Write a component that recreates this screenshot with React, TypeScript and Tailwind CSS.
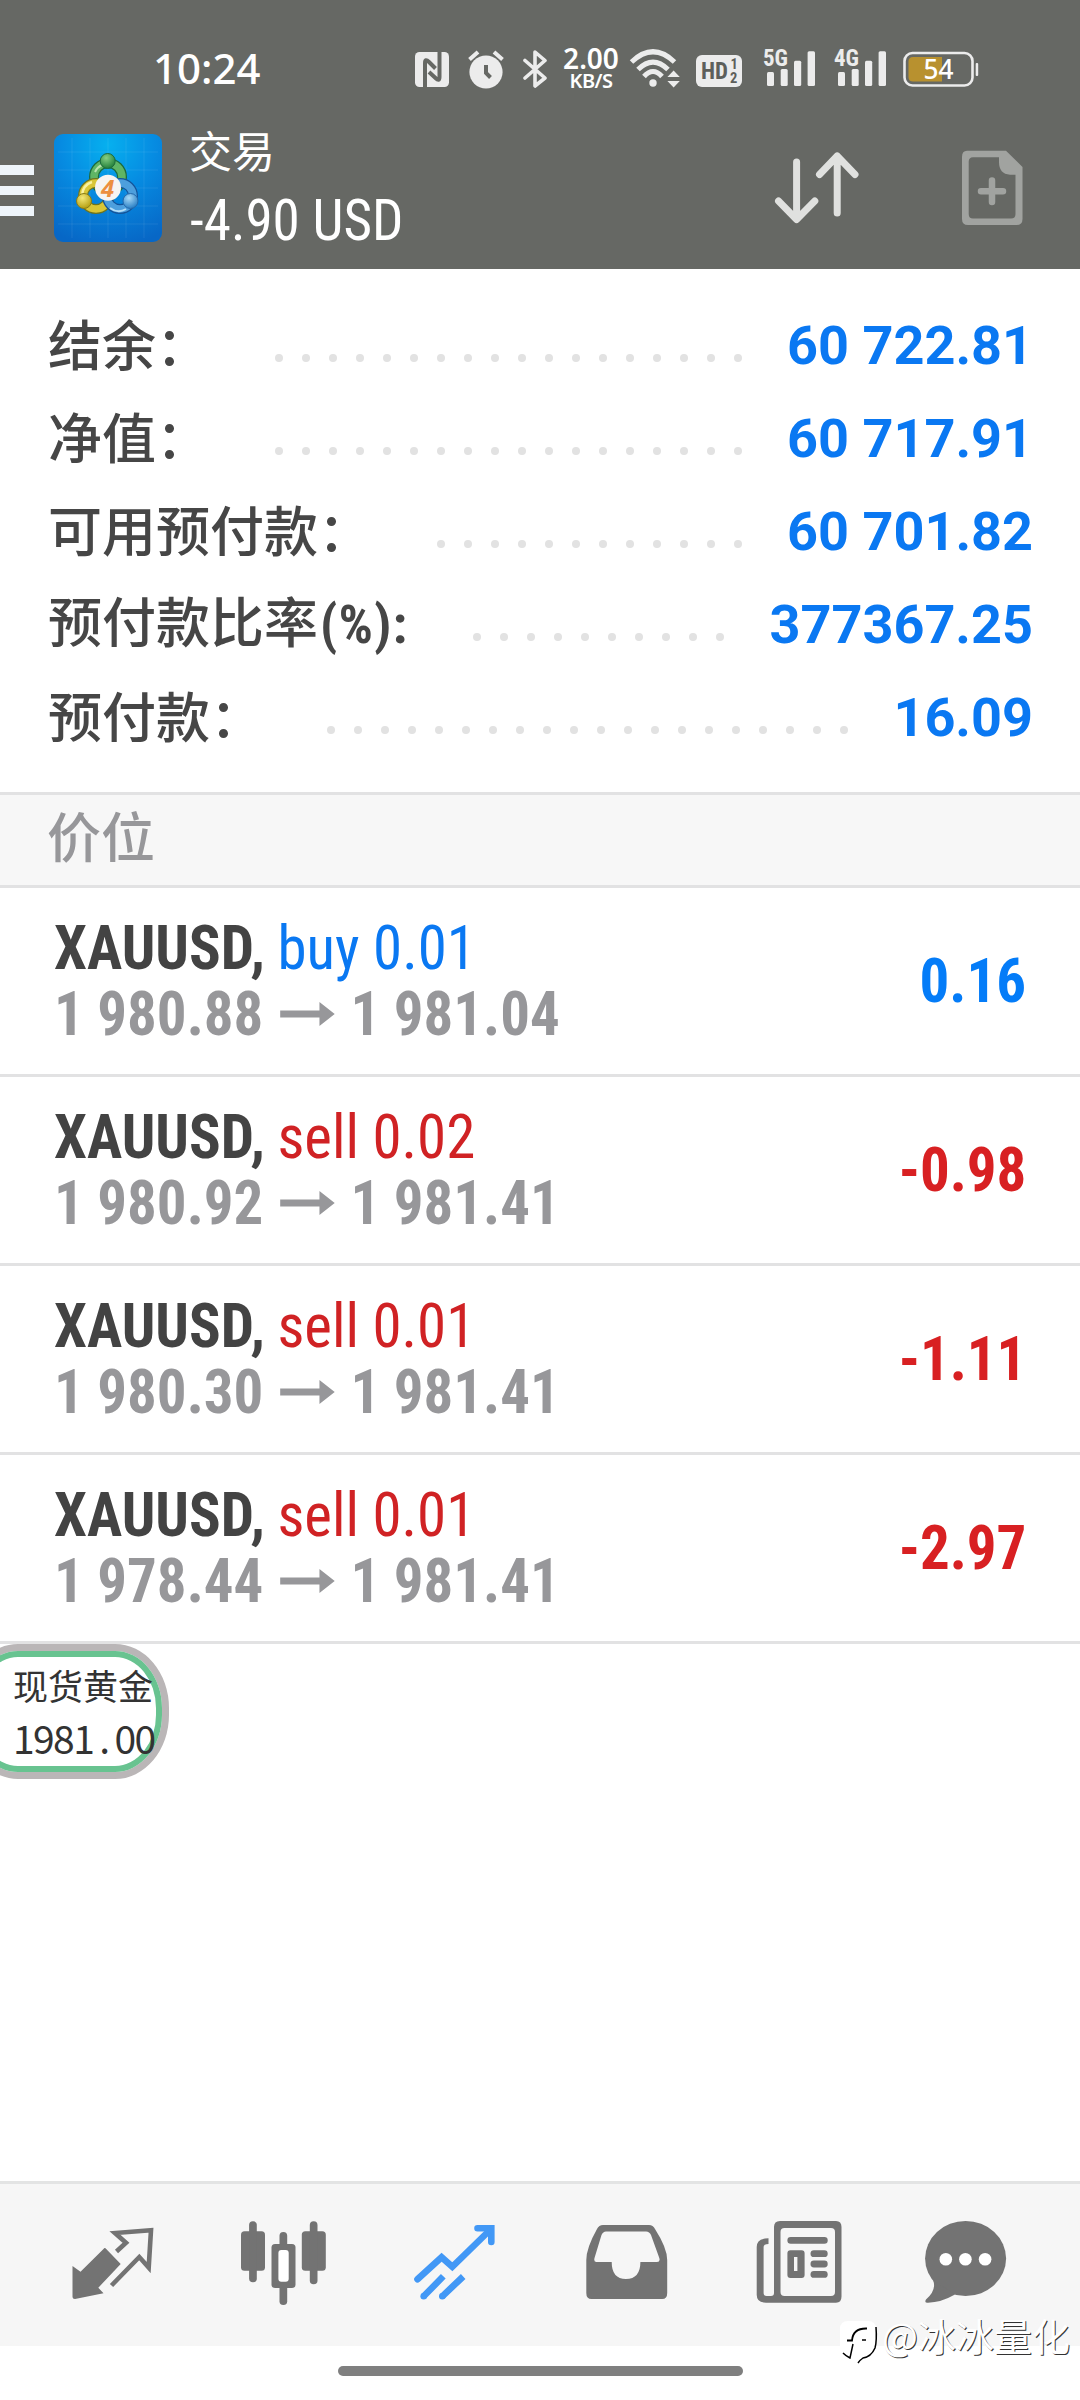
type AccountLine = {
  label: string;
  suffix?: string;
  dots: number;
  value: string;
};

type Position = {
  side: "buy" | "sell";
  volume: string;
  open: string;
  current: string;
  profit: string;
};

const account: AccountLine[] = [
  { label: "结余：", dots: 18, value: "60 722.81" },
  { label: "净值：", dots: 18, value: "60 717.91" },
  { label: "可用预付款：", dots: 12, value: "60 701.82" },
  { label: "预付款比率", suffix: "(%):", dots: 10, value: "377367.25" },
  { label: "预付款：", dots: 20, value: "16.09" },
];

const positions: Position[] = [
  { side: "buy", volume: "0.01", open: "1 980.88", current: "1 981.04", profit: "0.16" },
  { side: "sell", volume: "0.02", open: "1 980.92", current: "1 981.41", profit: "-0.98" },
  { side: "sell", volume: "0.01", open: "1 980.30", current: "1 981.41", profit: "-1.11" },
  { side: "sell", volume: "0.01", open: "1 978.44", current: "1 981.41", profit: "-2.97" },
];

const Signal = ({ label }: { label: string }) => (
  <svg width="53" height="40" viewBox="0 0 53 40" fill="#ececec" className="overflow-visible">
    <rect x="4" y="23" width="7" height="14" rx="1.5" />
    <rect x="17.7" y="20" width="7" height="17" rx="1.5" />
    <rect x="31" y="11.7" width="7.2" height="25.3" rx="1.5" />
    <rect x="44.6" y="2.3" width="7.4" height="34.7" rx="1.5" />
    <text
      x="0"
      y="17.3"
      textLength="25"
      lengthAdjust="spacingAndGlyphs"
      stroke="#666864"
      strokeWidth="2"
      paintOrder="stroke"
      className="font-['Roboto_Condensed'] text-[24px] font-bold"
    >
      {label}
    </text>
  </svg>
);

const StatusBar = () => (
  <div className="flex h-[138px] items-center pl-[153px] text-white">
    <span className="mb-[3px] w-[262px] font-['Noto_Sans'] text-[42px] leading-none font-medium">
      10:24
    </span>
    {/* NFC */}
    <svg width="34" height="40" viewBox="0 0 34 40">
      <rect y="3" width="34" height="35" rx="4.5" fill="#ececec" />
      <g fill="none" stroke="#666864" strokeWidth="4">
        <path d="M10 38.5V14Q10 9 14 13L20.5 19.5" />
        <path d="M24.5 2.5V28Q24.5 33 20.5 29L14 23" />
      </g>
    </svg>
    {/* 알람 */}
    <svg width="36" height="40" viewBox="0 0 36 40" className="ml-[19px]">
      <circle cx="18" cy="23" r="16.6" fill="#ececec" />
      <path d="M1.5 10.5L10 3M26 3l8.5 7.5" stroke="#ececec" strokeWidth="4" />
      <path d="M18 16v8l4.5 4.5" stroke="#666864" strokeWidth="4" fill="none" />
    </svg>
    <svg width="25" height="40" viewBox="0 0 25 40" className="ml-[19px]">
      <path
        d="M2 11.5L22 29 12 37V3l10 8.5L2 29"
        fill="none"
        stroke="#ececec"
        strokeWidth="3.6"
        strokeLinejoin="round"
        strokeLinecap="round"
      />
    </svg>
    <div className="mb-[2px] ml-[13px] flex w-[60px] flex-col items-center font-['Noto_Sans'] leading-none font-semibold">
      <span className="mb-px text-[28px] leading-[24px]">2.00</span>
      <span className="text-[20px] leading-[20px] tracking-[-0.5px]">KB/S</span>
    </div>
    <svg width="52" height="40" viewBox="0 0 52 40" className="ml-[8px]">
      <g fill="none" stroke="#ececec" strokeWidth="5">
        <path d="M2.5 13Q24 -7.5 45.5 13" />
        <path d="M9 20.5Q24 5.5 39 20.5" />
        <path d="M15 27.5Q24 17.5 33 27.5" />
      </g>
      <circle cx="24" cy="34" r="3.7" fill="#ececec" />
      <path d="M38.4 28l6.2-6.5 6.2 6.5zM38.4 32h12.4l-6.2 6.5z" fill="#ececec" />
    </svg>
    <svg width="46" height="40" viewBox="0 0 46 40" className="ml-[15px]">
      <rect y="6" width="46" height="32" rx="6" fill="#ececec" />
      <g fill="#5d5f5b" className="font-['Roboto_Condensed'] font-bold">
        <text x="5" y="30.3" textLength="27" lengthAdjust="spacingAndGlyphs" className="text-[24px]">
          HD
        </text>
        <text x="34.5" y="20" className="text-[14.5px]">
          1
        </text>
        <text x="34" y="34" className="text-[14.5px]">
          2
        </text>
      </g>
    </svg>
    <div className="ml-[21px]">
      <Signal label="5G" />
    </div>
    <div className="ml-[18px]">
      <Signal label="4G" />
    </div>
    <svg width="76" height="40" viewBox="0 0 76 40" className="ml-[16px]">
      <rect x="1.5" y="4" width="68" height="32.5" rx="8" fill="none" stroke="#ececec" strokeWidth="2.6" />
      <path d="M10 8H39V32.5H10Q5.5 32.5 5.5 28V12.5Q5.5 8 10 8z" fill="#b8912f" />
      <rect x="72.7" y="14" width="2.5" height="13" rx="1" fill="#ececec" />
      <text
        x="20.5"
        y="30"
        textLength="30"
        lengthAdjust="spacingAndGlyphs"
        fill="#fff"
        className="font-['Noto_Sans'] text-[27px] font-medium"
      >
        54
      </text>
    </svg>
  </div>
);

const Logo = () => (
  <svg width="108" height="108" viewBox="0 0 108 108">
    <defs>
      <radialGradient id="sky" cx="0.5" cy="0.1" r="0.95">
        <stop offset="0" stopColor="#06b0ef" />
        <stop offset="0.45" stopColor="#068ce2" />
        <stop offset="1" stopColor="#0767c6" />
      </radialGradient>
      <radialGradient id="green" cx="0.4" cy="0.3" r="0.7">
        <stop offset="0" stopColor="#86cf84" />
        <stop offset="1" stopColor="#23803a" />
      </radialGradient>
      <radialGradient id="yellow" cx="0.4" cy="0.3" r="0.7">
        <stop offset="0" stopColor="#f4e878" />
        <stop offset="1" stopColor="#b5a012" />
      </radialGradient>
      <radialGradient id="blue" cx="0.4" cy="0.3" r="0.7">
        <stop offset="0" stopColor="#a7daf8" />
        <stop offset="1" stopColor="#2a7fc4" />
      </radialGradient>
    </defs>
    <rect width="108" height="108" rx="9" fill="url(#sky)" />
    <path
      d="M18 4V104M36 4V104M54 4V104M72 4V104M90 4V104M4 18H104M4 36H104M4 54H104M4 72H104M4 90H104"
      stroke="#fff"
      strokeOpacity="0.08"
    />
    <g fill="none">
      <circle cx="54" cy="43" r="14" stroke="#1c6a3c" strokeWidth="10" />
      <circle cx="54" cy="43" r="14" stroke="#5fb565" strokeWidth="7.5" />
      <path d="M41 38a14 14 0 0 1 7-7" stroke="#b9e3ae" strokeWidth="2" />
      <circle cx="42" cy="62" r="13" stroke="#6d7420" strokeWidth="10" />
      <circle cx="42" cy="62" r="13" stroke="#d9c636" strokeWidth="7.5" />
      <path d="M28 61q1-10 10-13" stroke="#f9f2a0" strokeWidth="2.5" />
      <circle cx="66" cy="62" r="13" stroke="#14549a" strokeWidth="10" />
      <circle cx="66" cy="62" r="13" stroke="#4d9fdd" strokeWidth="7.5" />
      <path d="M56 74q8 6 16 1" stroke="#b5def7" strokeWidth="2" />
    </g>
    <circle cx="53.7" cy="27" r="7.5" fill="url(#green)" stroke="#1c6a3c" />
    <circle cx="30" cy="67" r="7.5" fill="url(#yellow)" stroke="#8a7d17" />
    <circle cx="76.5" cy="67" r="7.5" fill="url(#blue)" stroke="#2468ab" />
    <circle cx="54" cy="53.7" r="13" fill="#f6f4f2" />
    <text x="53.5" y="62.5" textAnchor="middle" fill="#ec8f3f" className="font-['Open_Sans'] text-[24px] font-bold italic">
      4
    </text>
  </svg>
);

const Header = () => (
  <header className="h-[269px] bg-[#666864]">
    <StatusBar />
    <div className="-mt-[10px] flex h-[141px] items-start">
      <div className="mt-[37px] flex w-[34px] flex-col gap-[11px]">
        <span className="h-[9.5px] bg-[#eef5fb]" />
        <span className="h-[9.5px] bg-[#eef5fb]" />
        <span className="h-[9.5px] bg-[#eef5fb]" />
      </div>
      <div className="mt-[6px] ml-[20px]">
        <Logo />
      </div>
      <div className="ml-[27px] flex flex-col text-white">
        <span className="font-['Noto_Sans_CJK_SC',sans-serif] text-[43px] leading-[42px]">交易</span>
        <span className="mt-[22px] ml-px origin-left scale-x-[0.967] font-['Roboto_Condensed'] text-[57px] leading-[57px] font-[450]">
          -4.90 USD
        </span>
      </div>
      <svg width="88" height="78" viewBox="0 0 88 78" className="mt-[21px] ml-auto">
        <g fill="none" stroke="#e0e1df" strokeWidth="7" strokeLinecap="round" strokeLinejoin="round">
          <path d="M23.6 13V70M5.5 52L23.6 70.5 41.8 52" />
          <path d="M64.2 64V7M46.5 25.5L64.2 7 82 25.5" />
        </g>
      </svg>
      <svg width="62" height="76" viewBox="0 0 62 76" className="mt-[22px] mr-[57px] ml-[100px]">
        <path
          fillRule="evenodd"
          fill="#a1a3a0"
          d="M6 .7H45L61.5 17V69q0 6-6 6H7q-6 0-6-6V7Q1 .7 6 .7zM12 7.3q-4.3 0-4.3 4.5V64q0 4.5 4.3 4.5H50q4.5 0 4.5-4.5V24.7H49Q38 24 38 12V7.3z"
        />
        <path d="M31 30.5V52M20 41.3H42" stroke="#a1a3a0" strokeWidth="6.5" strokeLinecap="round" />
      </svg>
    </div>
  </header>
);

const AccountRow = ({ label, suffix, dots, value }: AccountLine) => (
  <div className="flex h-[93px] items-center pr-[47px] pl-[48px]">
    <span className="mb-[5px] font-['Noto_Sans_CJK_SC',sans-serif] text-[54px] leading-[88px] font-medium whitespace-nowrap text-[#464646]">
      {label}
      {suffix && (
        <span className="ml-[2px] font-['Roboto_Condensed'] font-bold tracking-[1px]">{suffix}</span>
      )}
    </span>
    <div className="mt-[25px] mr-[45px] ml-auto flex gap-[19px]">
      {Array.from({ length: dots }, (_, i) => (
        <span key={i} className="size-2 rounded-full bg-[#e2e2e2]" />
      ))}
    </div>
    <span className="font-['Roboto'] text-[54px] leading-[93px] font-bold whitespace-nowrap text-[#0a78f2]">
      {value}
    </span>
  </div>
);

const PositionRow = ({ side, volume, open, current, profit }: Position) => {
  const sideColor = side === "buy" ? "text-[#0a78f2]" : "text-[#d02224]";
  const profitColor = profit.startsWith("-") ? "text-[#d82022]" : "text-[#047cf8]";

  return (
    <div className="flex h-[189px] items-center justify-between border-b-3 border-[#e2e2e3] pr-[54px] pl-[54px] font-['Roboto_Condensed'] text-[62px] whitespace-nowrap">
      <div className="flex origin-left scale-x-95 flex-col leading-[66px]">
        <div>
          <span className="font-bold text-[#434343]">XAUUSD, </span>
          <span className={`-ml-px font-[450] ${sideColor}`}>
            {side} {volume}
          </span>
        </div>
        <div className="flex items-center font-bold text-[#97979a]">
          <span className="w-[238px]">{open}</span>
          <svg width="58" height="24" viewBox="0 0 56 24" preserveAspectRatio="none" fill="currentColor">
            <path d="M0 8.5H40V0L55.5 12 40 24V15.5H0z" />
          </svg>
          <span className="ml-[16px]">{current}</span>
        </div>
      </div>
      <span className={`mb-[2px] origin-right scale-x-95 font-bold ${profitColor}`}>{profit}</span>
    </div>
  );
};

const FloatingQuote = () => (
  <div className="absolute top-[1644px] -left-[36px] h-[135px] w-[205px] rounded-[54px/64px] border-7 border-[#bab6b7] bg-white">
    <div className="h-full rounded-[47px/57px] border-6 border-[#68c390] pt-[10px] pl-[36px] whitespace-nowrap text-[#333]">
      <div className="font-['Noto_Sans_CJK_SC',sans-serif] text-[35px] leading-[36px]">现货黄金</div>
      <div className="mt-[14px] font-['Noto_Sans_CJK_SC',sans-serif] text-[39px] leading-[40px] tracking-[-1.6px]">
        1981<span className="mx-[6px]">.</span>00
      </div>
    </div>
  </div>
);

const BottomNav = () => (
  <nav className="flex h-[165px] border-t-3 border-[#e3e4e4] bg-[#f6f6f6] px-[27px] pt-8 text-[#737373]">
    {/* 시세 */}
    <div className="flex w-[171px] justify-center">
      <svg width="90" height="94" viewBox="0 0 90 94" fill="currentColor">
        <path d="M37.5 32.3L52.7 48 30.3 71.7l5.2 5.6L7 83Q4.5 83 4.5 80.5V50l8 5.7L35.5 33q1-1.5 2-.7z" />
        <path
          d="M48.5 35.5L58 26.7 47 17 83 14.2 80.7 51.5 71.3 41 43.5 69.5"
          fill="none"
          stroke="currentColor"
          strokeWidth="4.6"
        />
      </svg>
    </div>
    {/* 차트 */}
    <div className="flex w-[171px] justify-center">
      <svg width="90" height="94" viewBox="0 0 90 94" fill="currentColor">
        <rect x="2" y="15.3" width="24" height="39.5" rx="3.5" />
        <rect x="10.1" y="5.3" width="7.7" height="61" rx="3.8" />
        <rect x="62.8" y="15.3" width="24" height="39.5" rx="3.5" />
        <rect x="70.8" y="5.3" width="7.7" height="63" rx="3.8" />
        <rect x="40.5" y="16" width="7.7" height="73" rx="3.8" />
        <rect x="32.5" y="28" width="24" height="44" rx="3.5" />
        <rect x="39.4" y="34" width="10.3" height="31.7" rx="3" fill="#fff" />
      </svg>
    </div>
    {/* 거래 */}
    <div className="flex w-[171px] justify-center">
      <svg width="90" height="94" viewBox="0 0 90 94" fill="none" stroke="#4298f6" strokeWidth="6.6">
        <path d="M7.5 63.3L31.6 41.3l10.7 9.5L80.5 13.5" strokeLinecap="round" />
        <path d="M67.5 12.3H81.3V26" strokeLinecap="round" />
        <path d="M13.7 80.3L33.3 60.3M32.3 80.3L53.2 60.5" />
        <g fill="#4298f6" stroke="none">
          <circle cx="13.7" cy="80.3" r="3.3" />
          <circle cx="32.3" cy="80.3" r="3.3" />
        </g>
      </svg>
    </div>
    {/* 내역 */}
    <div className="flex w-[171px] justify-center">
      <svg width="90" height="94" viewBox="0 0 90 94" fill="currentColor">
        <path
          fillRule="evenodd"
          d="M22 9H68q4 0 6 4Q86.2 32 86.2 44V77q0 6-5 6H10.5q-5.2 0-5.2-6V44Q5.3 32 16 13q2-4 6-4zM25 15.5q-3 0-4.5 3.5L13.5 42q-1 4 2 4H30.7q0 17 14.3 17T59.4 46H76q3.5 0 2.3-4L70 19q-1.5-3.5-5-3.5z"
        />
      </svg>
    </div>
    {/* 뉴스 */}
    <div className="flex w-[171px] justify-center">
      <svg width="90" height="94" viewBox="0 0 90 94" fill="currentColor">
        <path
          fillRule="evenodd"
          d="M28 5H84q5.5 0 5.5 6V80.5q0 6.2-5.5 6.2H14q-9.3 0-9.3-8V31q0-8.7 11.8-8.7v5.7q-4.9 0-4.9 3V77q0 3 3 3H19q3 0 3-3V11q0-6 6-6zM32.5 12q-4 0-4 4V76q0 4 4 4H79q4 0 4-4V16q0-4-4-4z"
        />
        <rect x="35.4" y="21" width="40.3" height="6.7" rx="3.3" />
        <path fillRule="evenodd" d="M38.4 34.3H49.6q3 0 3 3V59q0 3-3 3H38.4q-3 0-3-3V37.3q0-3 3-3zM42 41V55h3.4V41z" />
        <rect x="58.5" y="34.3" width="17.2" height="6.8" rx="3.4" />
        <rect x="58.5" y="44.6" width="17.2" height="6.8" rx="3.4" />
        <rect x="58.5" y="55" width="17.2" height="6.8" rx="3.4" />
      </svg>
    </div>
    {/* 메시지 */}
    <div className="flex w-[171px] justify-center">
      <svg width="90" height="94" viewBox="0 0 90 94" fill="currentColor">
        <ellipse cx="42.6" cy="42.5" rx="40.5" ry="37.5" />
        <path d="M10 64Q14 74 3 83.5 1 87 5 86.7 18 86.5 32 78.5z" />
        <g fill="#fff">
          <circle cx="22.8" cy="43.3" r="6.3" />
          <circle cx="42.4" cy="43.3" r="6.3" />
          <circle cx="62.1" cy="43.3" r="6.3" />
        </g>
      </svg>
    </div>
  </nav>
);

const Watermark = () => (
  <div className="absolute top-[2315px] left-[840px] flex items-start text-white">
    <svg width="38" height="44" viewBox="0 0 38 44" className="mt-[6px]">
      <path d="M8 0H28q8 0 8 8V24q0 11-16 16L18 38 9 37 0 31V8Q0 0 8 0z" fill="#fff" />
      <path d="M7 19.5h5Q13 7 27 7.5" fill="none" stroke="#000" strokeWidth="1.8" />
      <path d="M22 19h4M13 23L10 37Q6 35 3 32M36 6Q37 20 35 27 31 36 23 37q-3 2-5 5" fill="none" stroke="#000" strokeWidth="1.5" />
    </svg>
    <span className="ml-[4px] font-['Noto_Sans_CJK_SC',sans-serif] text-[38px] leading-[40px] [text-shadow:1px_1px_0_#333]">
      @冰冰量化
    </span>
  </div>
);

export default function App() {
  return (
    <div className="relative flex h-[2400px] w-[1080px] flex-col overflow-hidden bg-white">
      <Header />
      <section className="pt-[30px] pb-[28px]">
        {account.map((line) => (
          <AccountRow key={line.label} {...line} />
        ))}
      </section>
      <div className="h-[96px] border-y-3 border-[#e2e2e3] bg-[#f7f7f7] pl-[47px] font-['Noto_Sans_CJK_SC',sans-serif] text-[54px] leading-[80px] font-medium text-[#97979a]">
        价位
      </div>
      {positions.map((position, i) => (
        <PositionRow key={i} {...position} />
      ))}
      <div className="mt-auto">
        <BottomNav />
        <div className="flex h-[54px] justify-center bg-white pt-5">
          <span className="h-[10px] w-[405px] rounded-full bg-[#7f7f7f]" />
        </div>
      </div>
      <FloatingQuote />
      <Watermark />
    </div>
  );
}
